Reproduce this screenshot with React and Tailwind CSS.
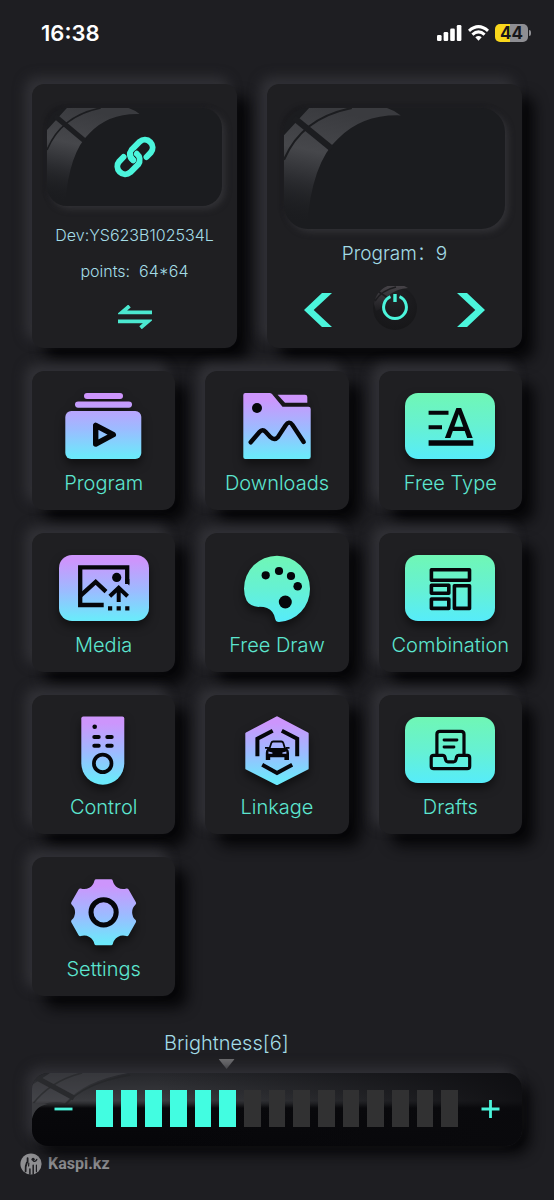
import React, { useState } from 'react';

const MAX_LEVEL = 15;

const Glare = ({ className }) => (
  <svg viewBox="0 0 176 98" preserveAspectRatio="none" className={className} aria-hidden="true">
    <defs>
      <linearGradient id="glare" x1="0.3" y1="0" x2="0.1" y2="1">
        <stop offset="0" stopColor="#3a3b3f" />
        <stop offset="0.35" stopColor="#46474b" />
        <stop offset="0.6" stopColor="#2c2d31" />
        <stop offset="0.95" stopColor="#1b1c1f" stopOpacity="0" />
      </linearGradient>
    </defs>
    <path d="M0 98V22L20 0H82Q88 2 93 6Q62 5 43 25Q22 44 18 98Z" fill="url(#glare)" />
    <path d="M0 42Q14 8 54 0" fill="none" stroke="#1c1d20" strokeWidth="1.6" />
    <path d="M8 8L38 33" fill="none" stroke="#1c1d20" strokeWidth="5" />
  </svg>
);

const LinkIcon = () => (
  <svg viewBox="0 0 42 42" className="relative h-[42px] w-[42px]" fill="none" stroke="#4bf5dc" strokeWidth="6" strokeLinecap="round" strokeLinejoin="round">
    <path d="M32.5 21L36.7 16.7A7.8 7.8 0 0 0 25.7 5.7L17.8 13.6A7.8 7.8 0 0 0 19.2 24.2" />
    <path d="M9.5 21L5.3 25.3A7.8 7.8 0 0 0 16.3 36.3L24.2 28.4A7.8 7.8 0 0 0 22.8 17.8" stroke="#1b1c1f" strokeWidth="7.6" />
    <path d="M9.5 21L5.3 25.3A7.8 7.8 0 0 0 16.3 36.3L24.2 28.4A7.8 7.8 0 0 0 22.8 17.8" />
    <path d="M15.9 17.5Q15.8 21.6 19.2 24.2" />
  </svg>
);

const SwapIcon = () => (
  <svg viewBox="0 0 34 24" className="h-6 w-[34px]" fill="none" stroke="#4be8d0" strokeWidth="3.8">
    <path d="M34 7.4H4L11.5 1" />
    <path d="M0 16.4H30L22.5 22.8" />
  </svg>
);

const Chevron = ({ className }) => (
  <svg viewBox="0 0 28 34" className={className} fill="#4bf5dc">
    <path d="M28 0H18L0 17L18 34H28L9.7 17Z" />
  </svg>
);

const PowerIcon = () => (
  <svg viewBox="0 0 48 48" className="h-12 w-12" fill="none">
    <defs>
      <radialGradient id="knob" cx="0.5" cy="0.3" r="0.7">
        <stop offset="0" stopColor="#222225" />
        <stop offset="0.6" stopColor="#1a1a1d" />
        <stop offset="1" stopColor="#171719" />
      </radialGradient>
      <linearGradient id="knobGlare" x1="0" y1="0" x2="0" y2="1">
        <stop offset="0" stopColor="#48454a" />
        <stop offset="1" stopColor="#1d1d20" />
      </linearGradient>
    </defs>
    <circle cx="24" cy="22" r="22" fill="url(#knob)" />
    <path d="M3 18A22 22 0 0 1 37 2Q15 4 9 23L5 25Z" fill="url(#knobGlare)" />
    <path d="M4 15Q11 4 25 1M8 6L17 12" stroke="#1c1c1f" strokeWidth="1.6" />
    <path d="M19.5 10.7A11.4 11.4 0 1 0 28.5 10.7" stroke="#4bf5dc" strokeWidth="3" />
    <path d="M24 8V16" stroke="#4bf5dc" strokeWidth="3.4" />
  </svg>
);

const ProgramIcon = () => (
  <>
    <rect x="25" y="1" width="39" height="6" rx="3" fill="url(#violet)" />
    <rect x="16" y="9.5" width="57" height="6.2" rx="3.1" fill="url(#violet)" />
    <rect x="6.3" y="19" width="76" height="48" rx="6" fill="url(#violet)" />
    <path d="M36.7 33.3V52L54.3 42.7Z" fill="none" stroke="#05060a" strokeWidth="5.4" strokeLinejoin="round" />
  </>
);

const DownloadsIcon = () => (
  <>
    <path d="M13.3 1H37.5Q39 1 40 2L50.5 14.7H76.5Q78.7 14.7 78.7 17V64.7Q78.7 67 76.5 67H13.3Q11.3 67 11.3 65V3Q11.3 1 13.3 1Z" fill="url(#violet)" />
    <path d="M45.6 2.7H73Q75.3 2.7 75.3 5V10.7H53Z" fill="url(#violet)" />
    <circle cx="25" cy="16" r="5" fill="#05060a" />
    <path d="M18.7 50.3L27.5 40Q30.5 36.5 33.5 39.8L38.5 45.2Q42.5 49 46 45L53.5 33.5Q57 28 60.5 33L71.7 50" fill="none" stroke="#05060a" strokeWidth="4.4" strokeLinecap="round" />
  </>
);

const Plate = ({ fill }) => <rect x="0" y="1" width="90" height="66" rx="13" fill={fill} />;

const FreeTypeIcon = () => (
  <>
    <Plate fill="url(#mint)" />
    <path d="M23.6 20.7H43.5M23.6 35.3H37" stroke="#05060a" strokeWidth="4" />
    <path d="M23.6 51H68.3" stroke="#05060a" strokeWidth="5.6" />
    <text x="53.7" y="45.7" textAnchor="middle" fontFamily="Roboto, sans-serif" fontWeight="500" fontSize="43" fill="#05060a">A</text>
  </>
);

const MediaIcon = () => (
  <>
    <Plate fill="url(#violet)" />
    <path d="M44.7 51H21.2V13.4H68.2V30" fill="none" stroke="#05060a" strokeWidth="4.3" />
    <path d="M66.05 27.5L70.35 31.5V25H66.05Z" fill="#05060a" />
    <path d="M20.7 42.3L36.7 28L47 37.6" fill="none" stroke="#05060a" strokeWidth="4.3" />
    <circle cx="57.7" cy="23.4" r="4.6" fill="#05060a" />
    <path d="M59.7 34V48M50.8 42.2L59.7 33.7L68.6 42.2" fill="none" stroke="#05060a" strokeWidth="4" />
    <path d="M49 54.4H53.2M57.6 54.4H61.8M66.2 54.4H70.4" stroke="#05060a" strokeWidth="4.2" />
  </>
);

const FreeDrawIcon = () => (
  <>
    <path d="M45 1.7A33 33 0 0 1 78 35A33 33 0 0 1 47 68Q43.8 68 43.2 65Q42 57 35 54Q31.5 52.7 26.5 52.9Q18 52.4 14.6 46.5Q12 41 12 34.7A33 33 0 0 1 45 1.7Z" fill="url(#mint)" />
    <g fill="#05060a">
      <circle cx="33.7" cy="21.3" r="4.1" />
      <circle cx="47" cy="17" r="4.1" />
      <circle cx="59" cy="22" r="4.1" />
      <circle cx="65.7" cy="32.3" r="4.3" />
      <circle cx="53.3" cy="48" r="6.5" />
    </g>
  </>
);

const CombinationIcon = () => (
  <>
    <Plate fill="url(#mint)" />
    <g fill="none" stroke="#05060a" strokeWidth="3.6" strokeLinejoin="round">
      <rect x="26.4" y="15.8" width="38.1" height="10.4" />
      <rect x="26.4" y="31.3" width="17.4" height="8" />
      <rect x="26.4" y="45" width="17.4" height="9.4" />
      <rect x="49.4" y="31.8" width="15.1" height="22.6" />
    </g>
  </>
);

const ControlIcon = () => (
  <>
    <path d="M24.3 0.5H63.3Q65.3 0.5 65.3 2.5V47.2A21.5 21.5 0 0 1 22.3 47.2V2.5Q22.3 0.5 24.3 0.5Z" fill="url(#violet)" />
    <circle cx="35.7" cy="10.7" r="2.3" fill="#05060a" />
    <path d="M35.3 21H39.7M48.3 21H52.7M35.3 29.7H39.7M48.3 29.7H52.7" stroke="#05060a" strokeWidth="4" strokeLinecap="round" />
    <circle cx="43.7" cy="47.4" r="8.8" fill="none" stroke="#05060a" strokeWidth="3.7" />
  </>
);

const LinkageIcon = () => (
  <>
    <path d="M45 1.6L75.4 17.6V52.4L45 67.8L14.6 52.4V17.6Z" fill="url(#violet)" stroke="url(#violet)" strokeWidth="2.6" strokeLinejoin="round" />
    <g fill="none" stroke="#05060a" strokeWidth="4">
      <path d="M40.7 14.7L25.4 22.6V40.3" />
      <path d="M49.8 14.7L65.2 22.6V40.3" />
      <path d="M30.2 48.8L45 57L60.2 48.8" />
    </g>
    <path d="M37.5 32.5L39.3 27Q39.8 25.5 41.3 25.5H49.3Q50.8 25.5 51.3 27L53 32.5" fill="none" stroke="#05060a" strokeWidth="1.8" />
    <path d="M33 31H36.6L37.4 32H53.2L54 31H57.5V32.8H55.2Q57 34.4 57 37V44H52.4V41.3H38.2V44H33.8V37Q33.8 34.4 35.4 32.8H33Z" fill="#05060a" />
    <path d="M36.4 35.4L40.4 36.6V37.8H36.4ZM54.4 35.4L50.4 36.6V37.8H54.4Z" fill="#a5b8ff" />
  </>
);

const DraftsIcon = () => (
  <>
    <Plate fill="url(#mint)" />
    <g fill="none" stroke="#05060a" strokeWidth="3.2" strokeLinecap="round" strokeLinejoin="round">
      <path d="M31.9 38.5V18.3Q31.9 15.3 34.9 15.3H56Q59 15.3 59 18.3V38.5" />
      <path d="M28.7 39.3H37.8Q39.4 39.3 39.9 41L40.7 44Q41.1 45.8 42.9 45.8H48.6Q50.4 45.8 50.8 44L51.6 41Q52 39.3 53.7 39.3H62.2Q64.7 39.3 64.7 41.8V50.2Q64.7 52.7 62.2 52.7H28.7Q26.2 52.7 26.2 50.2V41.8Q26.2 39.3 28.7 39.3Z" />
      <path d="M39 24H52M39 31H49" strokeWidth="2.8" />
    </g>
  </>
);

const SettingsIcon = () => (
  <g transform="translate(44.6 34.3)">
    <path
      d="M-7.5 -33H7.5Q8.8 -33 9.2 -31.6A10.5 10.5 0 0 0 22.8 -23.8Q24.2 -24.1 25 -22.9L32.3 -10Q32.9 -8.8 32 -7.8A10.5 10.5 0 0 0 32 7.8Q32.9 8.8 32.3 10L25 22.9Q24.2 24.1 22.8 23.8A10.5 10.5 0 0 0 9.2 31.6Q8.8 33 7.5 33H-7.5Q-8.8 33 -9.2 31.6A10.5 10.5 0 0 0 -22.8 23.8Q-24.2 24.1 -25 22.9L-32.3 10Q-32.9 8.8 -32 7.8A10.5 10.5 0 0 0 -32 -7.8Q-32.9 -8.8 -32.3 -10L-25 -22.9Q-24.2 -24.1 -22.8 -23.8A10.5 10.5 0 0 0 -9.2 -31.6Q-8.8 -33 -7.5 -33Z"
      fill="url(#violetCentered)"
    />
    <circle r="12.6" fill="none" stroke="#05060a" strokeWidth="5" />
  </g>
);

const tiles = [
  { label: 'Program', icon: ProgramIcon },
  { label: 'Downloads', icon: DownloadsIcon },
  { label: 'Free Type', icon: FreeTypeIcon },
  { label: 'Media', icon: MediaIcon },
  { label: 'Free Draw', icon: FreeDrawIcon },
  { label: 'Combination', icon: CombinationIcon },
  { label: 'Control', icon: ControlIcon },
  { label: 'Linkage', icon: LinkageIcon },
  { label: 'Drafts', icon: DraftsIcon },
  { label: 'Settings', icon: SettingsIcon },
];

const Tile = ({ label, icon: Icon }) => (
  <button
    type="button"
    className="flex flex-col items-center rounded-xl bg-[#1f1f22] pt-[21px] pb-[13px] shadow-[-7px_-7px_12px_#313136,12px_12px_14px_#060608]"
  >
    <svg viewBox="0 0 90 70" className="h-[70px] w-[90px] overflow-visible drop-shadow-[0_5px_5px_rgba(0,0,0,0.5)]" aria-hidden="true">
      <Icon />
    </svg>
    <span className="mt-[7px] text-[20px] leading-7 font-light whitespace-nowrap text-[#5ce6d0]">{label}</span>
  </button>
);

const StatusBar = () => (
  <header className="flex items-center justify-between pt-[19px] pr-[23px] pl-[41px] text-white">
    <span className="text-[22px] leading-7 font-semibold">16:38</span>
    <div className="flex items-center gap-[6px]">
      <svg viewBox="0 0 25 16" className="h-4 w-[25px]" fill="#fff" aria-hidden="true">
        <rect x="0" y="10" width="4.6" height="6" rx="1.3" />
        <rect x="6.6" y="7" width="4.6" height="9" rx="1.3" />
        <rect x="13.2" y="3.6" width="4.6" height="12.4" rx="1.3" />
        <rect x="19.8" y="0" width="4.6" height="16" rx="1.3" />
      </svg>
      <svg viewBox="0 0 21 16" className="h-4 w-[21px]" fill="none" stroke="#fff" strokeWidth="3" aria-hidden="true">
        <path d="M1 5.8Q10.5 -2.6 20 5.8" />
        <path d="M4.4 9.6Q10.5 4.2 16.6 9.6" />
        <path d="M7.3 12.2L10.5 15.8L13.7 12.2Q10.5 9.7 7.3 12.2Z" fill="#fff" stroke="none" />
      </svg>
      <div className="flex items-center gap-px">
        <span className="flex h-[18px] w-[33px] items-center justify-center rounded-[5px] bg-linear-to-r from-[#f9d71c] from-44% to-[#8e8e93] to-44% text-[17px] leading-[18px] font-bold text-[#17171a]">
          44
        </span>
        <span className="h-[6px] w-[2px] rounded-r-full bg-[#8e8e93]" />
      </div>
    </div>
  </header>
);

const App = () => {
  const [program, setProgram] = useState(9);
  const [level, setLevel] = useState(6);

  const changeLevel = (step) => {
    setLevel((prev) => Math.min(MAX_LEVEL, Math.max(0, prev + step)));
  };

  return (
    <div className="min-h-screen overflow-hidden bg-[#1e1e22] font-[Inter,'Noto_Sans_CJK_SC',sans-serif]">
      {/* Shared icon gradients */}
      <svg className="absolute h-0 w-0" aria-hidden="true">
        <defs>
          <linearGradient id="violet" gradientUnits="userSpaceOnUse" x1="0" y1="0" x2="0" y2="68">
            <stop offset="0.1" stopColor="#cd95fc" />
            <stop offset="0.55" stopColor="#9bbcff" />
            <stop offset="0.95" stopColor="#6ce9fb" />
          </linearGradient>
          <linearGradient id="violetCentered" gradientUnits="userSpaceOnUse" x1="0" y1="-34" x2="0" y2="34">
            <stop offset="0.1" stopColor="#cd95fc" />
            <stop offset="0.55" stopColor="#9bbcff" />
            <stop offset="0.95" stopColor="#6ce9fb" />
          </linearGradient>
          <linearGradient id="mint" gradientUnits="userSpaceOnUse" x1="0" y1="0" x2="0" y2="68">
            <stop offset="0" stopColor="#70f7b4" />
            <stop offset="0.5" stopColor="#66f1d2" />
            <stop offset="1" stopColor="#56ecfb" />
          </linearGradient>
        </defs>
      </svg>

      <StatusBar />

      <main className="px-8 pt-[37px]">
        {/* Device and program cards */}
        <div className="grid grid-cols-[205fr_255fr] gap-[30px]">
          <section className="flex flex-col items-center rounded-xl bg-[#1f1f22] px-[15px] pt-6 pb-[19px] shadow-[-7px_-7px_12px_#313136,12px_12px_14px_#060608]">
            <div className="relative flex h-[98px] w-full items-center justify-center rounded-[20px] bg-[#1b1c1f] shadow-[3px_3px_6px_#323236,-2px_-2px_4px_#1a1a1d]">
              <div className="absolute inset-0 overflow-hidden rounded-[20px]">
                <Glare className="h-full w-full" />
              </div>
              <LinkIcon />
            </div>
            <p className="mt-[19px] text-[16px] leading-5 font-light text-[#a3dce6]">Dev:YS623B102534L</p>
            <p className="mt-4 text-[16px] leading-5 font-light text-[#a3dce6]">points:&nbsp; 64*64</p>
            <button type="button" aria-label="Switch device" className="mt-6">
              <SwapIcon />
            </button>
          </section>

          <section className="flex flex-col items-center rounded-xl bg-[#1f1f22] px-[17px] pt-6 pb-3 shadow-[-7px_-7px_12px_#313136,12px_12px_14px_#060608]">
            <div className="h-[121px] w-full overflow-hidden rounded-[24px] bg-[#1b1c1f] shadow-[3px_3px_6px_#323236,-2px_-2px_4px_#1a1a1d]">
              <Glare className="h-full w-full" />
            </div>
            <p className="mt-[11px] text-[19px] leading-7 font-light text-[#a3dce6]">Program：{program}</p>
            <div className="mt-[18px] flex w-full items-center justify-between px-5">
              <button type="button" aria-label="Previous program" onClick={() => setProgram(program - 1)}>
                <Chevron className="h-[34px] w-7" />
              </button>
              <button type="button" aria-label="Power">
                <PowerIcon />
              </button>
              <button type="button" aria-label="Next program" onClick={() => setProgram(program + 1)}>
                <Chevron className="h-[34px] w-7 rotate-180" />
              </button>
            </div>
          </section>
        </div>

        {/* Menu */}
        <nav className="mt-[23px] grid grid-cols-3 gap-x-[30px] gap-y-[23px]">
          {tiles.map((tile) => (
            <Tile key={tile.label} label={tile.label} icon={tile.icon} />
          ))}
        </nav>

        {/* Brightness */}
        <div className="mt-[33px] px-16">
          <div className="flex w-fit -translate-x-1/2 flex-col items-center" style={{ marginLeft: `${level * 6}%` }}>
            <label htmlFor="brightness" className="text-[20px] leading-7 font-light text-[#a3dce6]">
              Brightness[{level}]
            </label>
            <svg viewBox="0 0 16 10" className="mt-[2px] h-[10px] w-4" fill="#6f6f72" aria-hidden="true">
              <path d="M0 0H16L8 10Z" />
            </svg>
          </div>
        </div>
        <div className="relative mt-1 flex items-center rounded-2xl bg-[linear-gradient(90deg,transparent_25%,#0a0a0ddd_100%),linear-gradient(180deg,#26272b_0%,#3a3b3f_38%,#2a2b2e_42%,#08080b_48%,#060609_100%)] pt-[17px] pb-[19px] shadow-[-6px_-6px_12px_#313136,8px_8px_14px_#060608]">
          <div className="absolute inset-0 overflow-hidden rounded-2xl">
            <svg viewBox="0 0 120 73" className="h-[73px] w-[120px]" fill="none" aria-hidden="true">
              <path d="M0 34V12L18 0H96Q52 8 33 30Q14 26 0 38Z" fill="#55565b" opacity="0.35" />
              <path d="M0 32Q18 8 50 0M33 32Q52 10 98 2" stroke="#232427" strokeWidth="1.6" opacity="0.6" />
              <path d="M5 5L42 25" stroke="#292a2d" strokeWidth="5" />
              <path d="M0 30V46Q3 33 16 31Z" fill="#3a3b3f" />
            </svg>
          </div>
          <button type="button" aria-label="Decrease brightness" onClick={() => changeLevel(-1)} className="relative flex w-16 justify-center">
            <svg viewBox="0 0 20 20" className="h-5 w-5" stroke="#4bf5dc" strokeWidth="2.8">
              <path d="M0.5 10H18.5" />
            </svg>
          </button>
          <div className="relative flex h-[37px] flex-1 gap-2">
            {Array.from({ length: MAX_LEVEL }, (_, i) => (
              <span key={i} className={i < level ? 'flex-1 bg-[#42fde1]' : 'flex-1 bg-[#313132]'} />
            ))}
            <input
              id="brightness"
              type="range"
              min="0"
              max={MAX_LEVEL}
              value={level}
              onChange={(e) => setLevel(Number(e.target.value))}
              className="absolute inset-0 h-full w-full cursor-pointer opacity-0"
            />
          </div>
          <button type="button" aria-label="Increase brightness" onClick={() => changeLevel(1)} className="relative flex w-16 justify-center">
            <svg viewBox="0 0 20 20" className="h-5 w-5" stroke="#4bf5dc" strokeWidth="2.8">
              <path d="M1.5 10H19.5M10.5 1V19" />
            </svg>
          </button>
        </div>
      </main>

      <footer className="mt-[7px] flex items-center gap-[6px] pb-6 pl-5">
        <svg viewBox="0 0 22 22" className="h-[22px] w-[22px]" aria-hidden="true">
          <circle cx="11" cy="11" r="10.6" fill="#8f8f92" />
          <g fill="none" stroke="#1e1e22" strokeLinecap="round">
            <path d="M7.6 5.2V9M6.9 9.5Q5.2 13 5.6 18.4" strokeWidth="1.8" />
            <path d="M8.8 10L8.6 13" strokeWidth="1.2" />
            <path d="M13.4 8Q15.2 9.4 16.8 6.4" strokeWidth="1.2" />
            <path d="M13.2 12.2V21M9.9 16V21" strokeWidth="1.5" />
            <path d="M16.4 12V18.6" strokeWidth="1.2" />
          </g>
          <circle cx="13.1" cy="6.3" r="1.6" fill="#1e1e22" />
        </svg>
        <span className="font-[Roboto,sans-serif] text-[16px] leading-5 font-bold text-[#8f8f92]">Kaspi.kz</span>
      </footer>
    </div>
  );
};

export default App;
